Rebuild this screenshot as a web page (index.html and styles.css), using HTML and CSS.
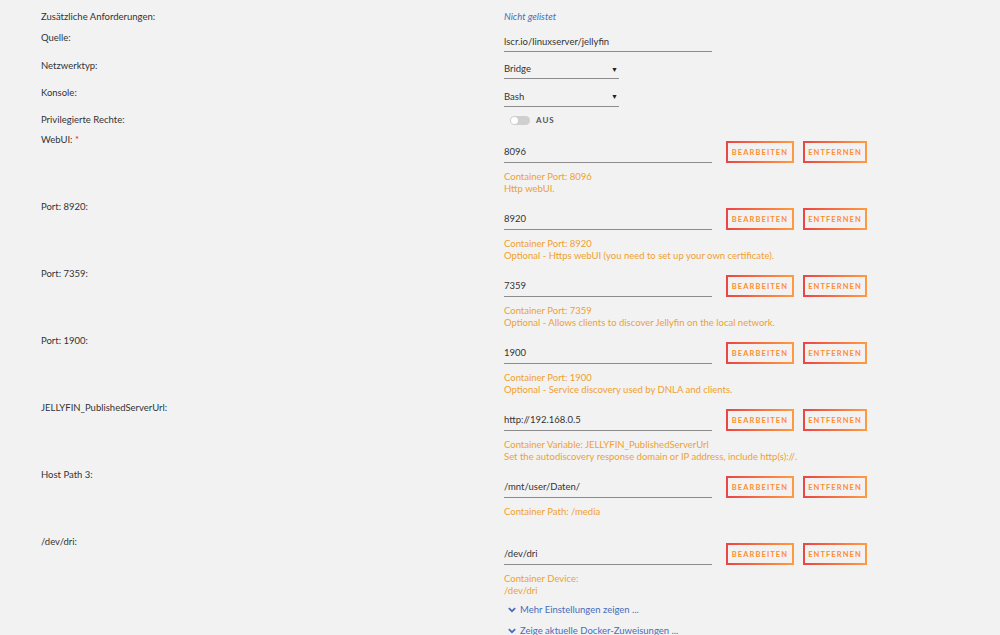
FILE: index.html
```html
<!DOCTYPE html>
<html lang="de">
<head>
<meta charset="UTF-8" />
<title>Container bearbeiten</title>
<link rel="stylesheet" href="styles.css">
</head>
<body>
<div class="form">
  <div class="row r-req">
    <div class="label">Zusätzliche Anforderungen:</div>
    <div class="value"><span class="unlisted">Nicht gelistet</span></div>
  </div>
  <div class="row r-src">
    <div class="label">Quelle:</div>
    <div class="value"><div class="field wide">lscr.io/linuxserver/jellyfin</div></div>
  </div>
  <div class="row r-net">
    <div class="label">Netzwerktyp:</div>
    <div class="value"><div class="field select">Bridge<span class="caret">▼</span></div></div>
  </div>
  <div class="row r-con">
    <div class="label">Konsole:</div>
    <div class="value"><div class="field select">Bash<span class="caret">▼</span></div></div>
  </div>
  <div class="row r-priv">
    <div class="label">Privilegierte Rechte:</div>
    <div class="value"><span class="switch"><span class="knob"></span></span><span class="switch-text">AUS</span></div>
  </div>

  <div class="row cfg">
    <div class="label">WebUI: <span class="req">*</span></div>
    <div class="value">
      <div class="line"><div class="field wide">8096</div><button class="btn edit">Bearbeiten</button><button class="btn del">Entfernen</button></div>
      <div class="desc">Container Port: 8096<br>Http webUI.</div>
    </div>
  </div>
  <div class="row cfg">
    <div class="label">Port: 8920:</div>
    <div class="value">
      <div class="line"><div class="field wide">8920</div><button class="btn edit">Bearbeiten</button><button class="btn del">Entfernen</button></div>
      <div class="desc">Container Port: 8920<br>Optional - Https webUI (you need to set up your own certificate).</div>
    </div>
  </div>
  <div class="row cfg">
    <div class="label">Port: 7359:</div>
    <div class="value">
      <div class="line"><div class="field wide">7359</div><button class="btn edit">Bearbeiten</button><button class="btn del">Entfernen</button></div>
      <div class="desc">Container Port: 7359<br>Optional - Allows clients to discover Jellyfin on the local network.</div>
    </div>
  </div>
  <div class="row cfg">
    <div class="label">Port: 1900:</div>
    <div class="value">
      <div class="line"><div class="field wide">1900</div><button class="btn edit">Bearbeiten</button><button class="btn del">Entfernen</button></div>
      <div class="desc">Container Port: 1900<br>Optional - Service discovery used by DNLA and clients.</div>
    </div>
  </div>
  <div class="row cfg">
    <div class="label">JELLYFIN_PublishedServerUrl:</div>
    <div class="value">
      <div class="line"><div class="field wide">http://192.168.0.5</div><button class="btn edit">Bearbeiten</button><button class="btn del">Entfernen</button></div>
      <div class="desc">Container Variable: JELLYFIN_PublishedServerUrl<br>Set the autodiscovery response domain or IP address, include http(s)://.</div>
    </div>
  </div>
  <div class="row cfg">
    <div class="label">Host Path 3:</div>
    <div class="value">
      <div class="line"><div class="field wide">/mnt/user/Daten/</div><button class="btn edit">Bearbeiten</button><button class="btn del">Entfernen</button></div>
      <div class="desc">Container Path: /media</div>
    </div>
  </div>
  <div class="row cfg last">
    <div class="label">/dev/dri:</div>
    <div class="value">
      <div class="line"><div class="field wide">/dev/dri</div><button class="btn edit">Bearbeiten</button><button class="btn del">Entfernen</button></div>
      <div class="desc">Container Device:<br>/dev/dri</div>
      <a class="more" href="#"><svg viewBox="0 0 10 7" width="8" height="6"><path d="M1 1.2 5 5 9 1.2" fill="none" stroke="#486dba" stroke-width="2.2"/></svg>Mehr Einstellungen zeigen ...</a>
      <a class="more" href="#"><svg viewBox="0 0 10 7" width="8" height="6"><path d="M1 1.2 5 5 9 1.2" fill="none" stroke="#486dba" stroke-width="2.2"/></svg>Zeige aktuelle Docker-Zuweisungen ...</a>
    </div>
  </div>
</div>
</body>
</html>
```

FILE: styles.css
```css
body {
  margin: 0;
  background: #f2f2f2;
  font-family: Lato, "Open Sans", sans-serif;
  font-size: 9.5px;
  color: #333;
}
.form {
  padding: 11px 0 0 41px;
}
.row {
  display: grid;
  grid-template-columns: 463px 1fr;
  line-height: 12px;
}
.r-req { height: 21px; }
.r-src { height: 28px; }
.r-net { height: 27px; }
.r-con { height: 27px; }
.r-priv { height: 20px; }
.cfg { height: 67px; }
.cfg.last { height: auto; }
.unlisted {
  color: #486dba;
  font-style: italic;
}
.req {
  color: #e22828;
}
.field {
  box-sizing: border-box;
  color: #333;
  padding: 4px 0 3px;
  border-bottom: 1px solid #8c8c8c;
  position: relative;
}
.r-net .field { padding-top: 3px; }
.wide { width: 208px; }
.select { width: 115px; }
.caret {
  position: absolute;
  right: 1px;
  top: 3px;
  font-size: 7px;
  color: #222;
}
.r-priv .value {
  display: flex;
  align-items: center;
  gap: 6px;
  height: 12px;
  padding-left: 6px;
}
.switch {
  width: 20px;
  height: 9px;
  border-radius: 5px;
  background: #cfcfcf;
  position: relative;
}
.knob {
  position: absolute;
  left: 1px;
  top: 1px;
  width: 7px;
  height: 7px;
  border-radius: 50%;
  background: #fff;
}
.switch-text {
  font-size: 8px;
  font-weight: bold;
  letter-spacing: 1px;
  color: #555;
}
.cfg .value {
  padding-top: 7px;
}
.line {
  display: flex;
  align-items: flex-end;
}
.line .field {
  margin-right: 14px;
  padding-bottom: 4px;
}
.btn {
  box-sizing: border-box;
  height: 22px;
  padding: 0;
  margin-right: 9px;
  border: 2px solid;
  border-image: linear-gradient(90deg, #ec4545, #ff9a40) 1;
  background: transparent;
  color: #ff8c2f;
  font-family: inherit;
  font-size: 7.5px;
  font-weight: bold;
  letter-spacing: 1.1px;
  text-transform: uppercase;
  text-align: center;
}
.btn.edit { width: 68px; }
.btn.del { width: 64px; }
.desc {
  margin-top: 8px;
  color: #f0a030;
  line-height: 11.5px;
}
.more {
  display: flex;
  align-items: center;
  gap: 4px;
  margin-top: 8px;
  margin-left: 4px;
  height: 12px;
  color: #486dba;
  text-decoration: none;
}
.more + .more { margin-top: 9px; }
```
